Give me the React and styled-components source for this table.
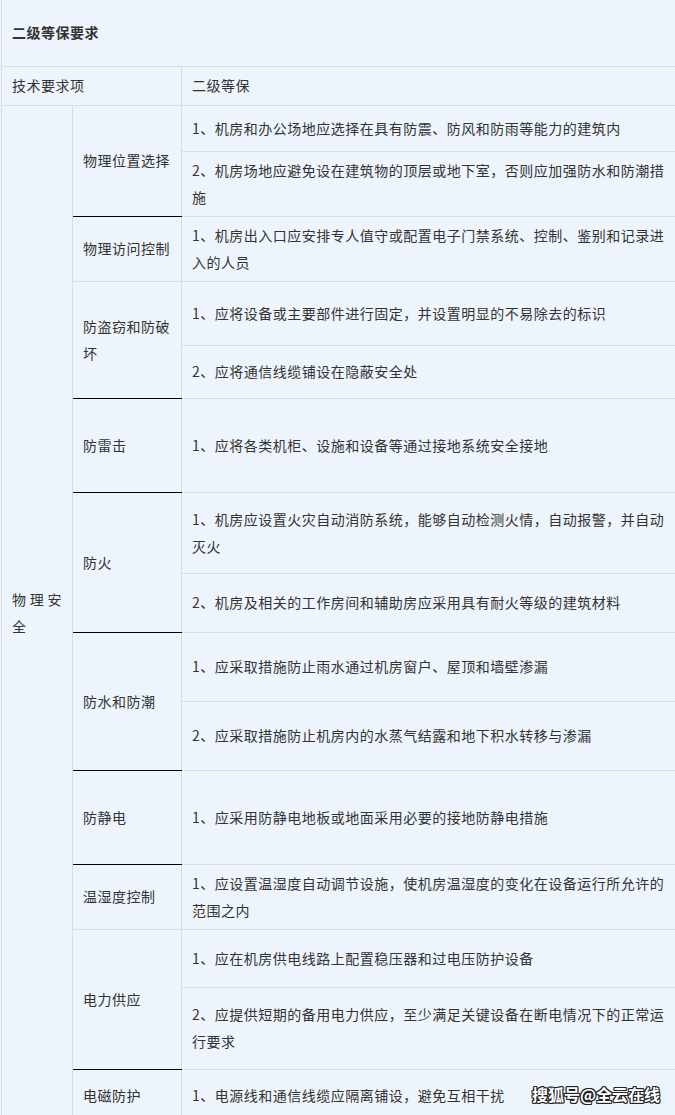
import React from "react";
import styled, { createGlobalStyle } from "styled-components";

const GlobalStyle = createGlobalStyle`
  html, body {
    margin: 0;
    padding: 0;
    background: #edf4fb;
    overflow: hidden;
  }
  body {
    font-family: "Noto Sans CJK SC", "Noto Sans", sans-serif;
  }
`;

const Page = styled.div`
  position: relative;
  height: 1115px;
  overflow: hidden;
  padding-left: 1px;
  background: #edf4fb;
`;

const Table = styled.table`
  border-collapse: collapse;
  table-layout: fixed;
  width: 682px;
  background: #edf4fb;
  color: #333;
  font-size: 14px;
  letter-spacing: 0.5px;
  line-height: 27px;
`;

const Row = styled.tr`
  height: ${({ $h }) => $h}px;
`;

const Cell = styled.td`
  border: 1px solid #dadcde;
  padding: 0 10px;
  vertical-align: middle;
  word-break: break-all;
  text-align: ${({ $justify }) => ($justify ? "justify" : "left")};
  font-weight: ${({ $bold }) => ($bold ? 700 : 400)};
  border-top: ${({ $noTop }) => ($noTop ? "none" : "1px solid #dadcde")};
  border-bottom: 1px solid
    ${({ $strong }) => ($strong ? "#000" : "#dadcde")};
`;

const Watermark = styled.div`
  position: absolute;
  right: 15px;
  bottom: 9px;
  font-size: 16px;
  font-weight: 700;
  letter-spacing: 0;
  color: #fff;
  text-shadow:
    1px 0 0 #222,
    -1px 0 0 #222,
    0 1px 0 #222,
    0 -1px 0 #222,
    1px 1px 0 #222,
    -1px -1px 0 #222,
    1px -1px 0 #222,
    -1px 1px 0 #222;
`;

const groups = [
  {
    name: "物理位置选择",
    strong: true,
    items: [
      ["1、机房和办公场地应选择在具有防震、防风和防雨等能力的建筑内", 46],
      ["2、机房场地应避免设在建筑物的顶层或地下室，否则应加强防水和防潮措施", 65],
    ],
  },
  {
    name: "物理访问控制",
    strong: false,
    items: [["1、机房出入口应安排专人值守或配置电子门禁系统、控制、鉴别和记录进入的人员", 65]],
  },
  {
    name: "防盗窃和防破坏",
    strong: true,
    items: [
      ["1、应将设备或主要部件进行固定，并设置明显的不易除去的标识", 64],
      ["2、应将通信线缆铺设在隐蔽安全处", 53],
    ],
  },
  {
    name: "防雷击",
    strong: true,
    items: [["1、应将各类机柜、设施和设备等通过接地系统安全接地", 94]],
  },
  {
    name: "防火",
    strong: true,
    items: [
      ["1、机房应设置火灾自动消防系统，能够自动检测火情，自动报警，并自动灭火", 81],
      ["2、机房及相关的工作房间和辅助房应采用具有耐火等级的建筑材料", 59],
    ],
  },
  {
    name: "防水和防潮",
    strong: true,
    items: [
      ["1、应采取措施防止雨水通过机房窗户、屋顶和墙壁渗漏", 69],
      ["2、应采取措施防止机房内的水蒸气结露和地下积水转移与渗漏", 69],
    ],
  },
  {
    name: "防静电",
    strong: true,
    items: [["1、应采用防静电地板或地面采用必要的接地防静电措施", 94]],
  },
  {
    name: "温湿度控制",
    strong: false,
    items: [["1、应设置温湿度自动调节设施，使机房温湿度的变化在设备运行所允许的范围之内", 65]],
  },
  {
    name: "电力供应",
    strong: true,
    items: [
      ["1、应在机房供电线路上配置稳压器和过电压防护设备", 58],
      ["2、应提供短期的备用电力供应，至少满足关键设备在断电情况下的正常运行要求", 82],
    ],
  },
  {
    name: "电磁防护",
    strong: false,
    items: [["1、电源线和通信线缆应隔离铺设，避免互相干扰", 52]],
  },
];

const totalRows = groups.reduce((n, g) => n + g.items.length, 0);

const App = () => {
  return (
    <Page>
      <GlobalStyle />
      <Table>
        <colgroup>
          <col style={{ width: 71 }} />
          <col style={{ width: 109 }} />
          <col style={{ width: 502 }} />
        </colgroup>
        <tbody>
          <Row $h={66}>
            <Cell colSpan={3} $bold $noTop>
              二级等保要求
            </Cell>
          </Row>
          <Row $h={39}>
            <Cell colSpan={2}>技术要求项</Cell>
            <Cell>二级等保</Cell>
          </Row>
          {groups.map((g, gi) =>
            g.items.map(([text, h], ii) => (
              <Row key={`${gi}-${ii}`} $h={h}>
                {gi === 0 && ii === 0 && (
                  <Cell rowSpan={totalRows} $justify>
                    物理安全
                  </Cell>
                )}
                {ii === 0 && (
                  <Cell rowSpan={g.items.length} $strong={g.strong}>
                    {g.name}
                  </Cell>
                )}
                <Cell>{text}</Cell>
              </Row>
            ))
          )}
        </tbody>
      </Table>
      <Watermark>搜狐号@全云在线</Watermark>
    </Page>
  );
};

export default App;
